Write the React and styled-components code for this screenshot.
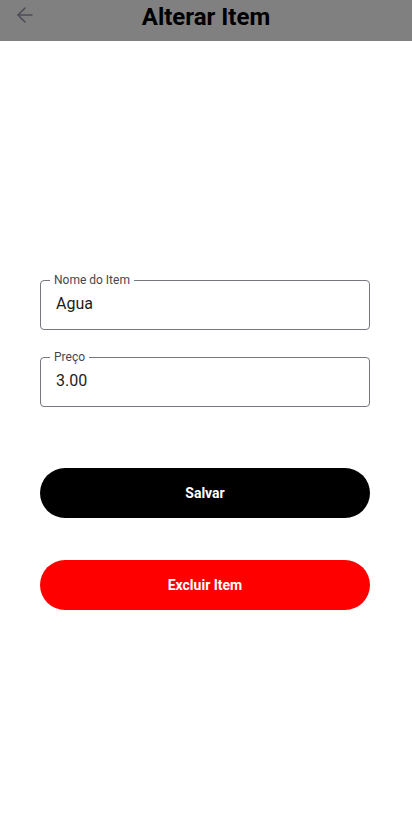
import React from 'react'
import styled, { createGlobalStyle } from 'styled-components'
import { ArrowLeft } from 'lucide-react'

const Global = createGlobalStyle`
  html, body { margin: 0; padding: 0; background: #fff; }
  body { font-family: Roboto, "Noto Sans", sans-serif; }
`

const Page = styled.div`
  width: 412px;
  min-height: 835px;
  background: #fff;
`

const Header = styled.header`
  height: 41px;
  background: #808080;
  display: grid;
  grid-template-columns: 48px 1fr 48px;
  align-items: start;
`

const Back = styled.button`
  border: none;
  background: none;
  padding: 0;
  margin: 3px 0 0 13px;
  width: 24px;
  height: 24px;
  display: flex;
  align-items: center;
  justify-content: center;
  color: #4d4957;
`

const Title = styled.h1`
  margin: 3px 0 0;
  font-size: 24px;
  line-height: 28px;
  font-weight: 700;
  color: #000;
  text-align: center;
`

const Form = styled.div`
  padding: 232px 42px 0 40px;
  display: flex;
  flex-direction: column;
`

const Field = styled.fieldset`
  margin: 0 0 ${p => p.$gap}px;
  padding: 0 15px;
  border: 1px solid #79747e;
  border-radius: 4px;
  height: 57px;
  box-sizing: border-box;
`

const Legend = styled.legend`
  padding: 0 4px;
  margin-left: -6px;
  font-size: 12px;
  line-height: 14px;
  color: #49454f;
`

const Value = styled.div`
  font-size: 16px;
  line-height: 24px;
  color: #1d1b20;
  padding-top: 5px;
`

const Button = styled.button`
  height: 50px;
  border: none;
  border-radius: 25px;
  background: ${p => p.$bg};
  color: #fff;
  font-family: Roboto, sans-serif;
  font-size: 14px;
  font-weight: 700;
  margin-bottom: ${p => p.$gap}px;
`

export default function App() {
  return (
    <Page>
      <Global />
      <Header>
        <Back><ArrowLeft size={24} strokeWidth={1.5} /></Back>
        <Title>Alterar Item</Title>
      </Header>
      <Form>
        <Field $gap={20}>
          <Legend>Nome do Item</Legend>
          <Value>Agua</Value>
        </Field>
        <Field $gap={61}>
          <Legend>Preço</Legend>
          <Value>3.00</Value>
        </Field>
        <Button $bg="#000" $gap={42}>Salvar</Button>
        <Button $bg="#ff0000" $gap={0}>Excluir Item</Button>
      </Form>
    </Page>
  )
}
